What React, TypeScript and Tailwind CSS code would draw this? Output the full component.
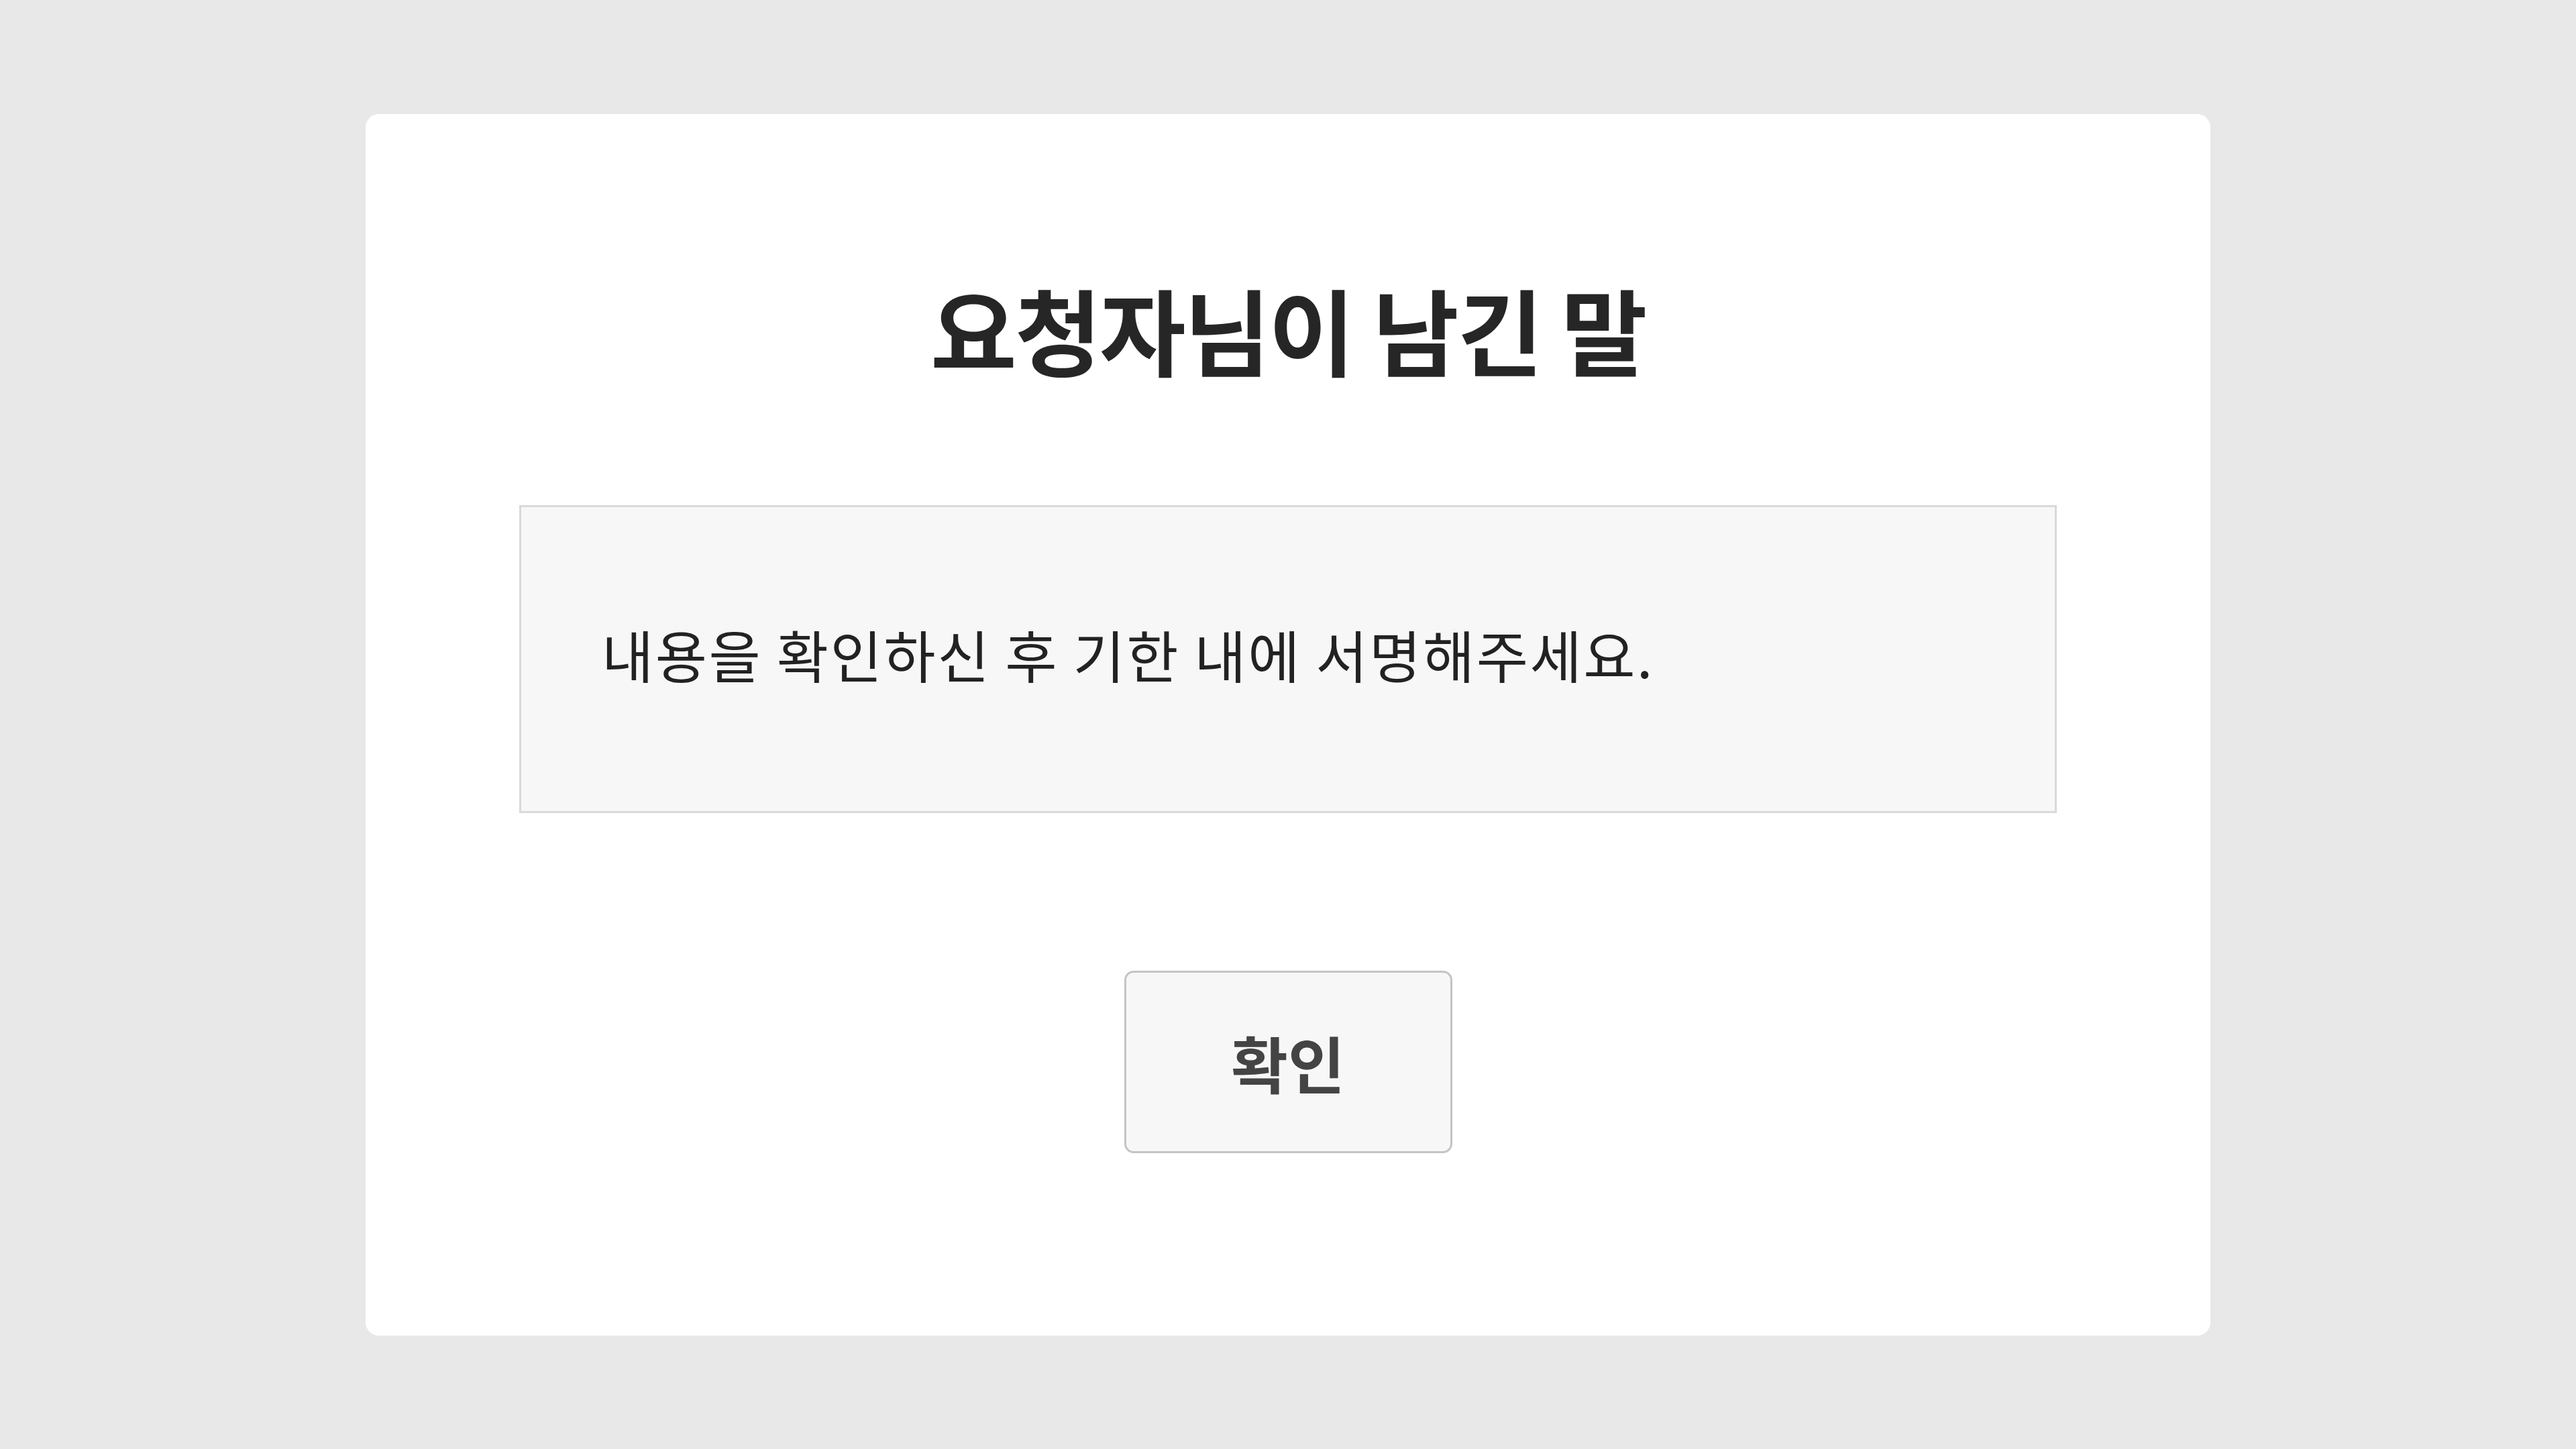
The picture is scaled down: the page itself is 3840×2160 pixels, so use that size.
export default function App() {
  return (
    <div className="min-h-screen w-full bg-[#e8e8e8] flex items-center justify-center font-['Noto_Sans_CJK_KR',sans-serif]">
      <div className="w-[2750px] bg-white rounded-[20px] pt-[249px] pb-[272px] px-[229px] flex flex-col items-center">
        <h1 className="text-[140px] leading-none font-bold tracking-[-0.02em] text-[#262626] text-center">
          요청자님이 남긴 말
        </h1>

        <div className="mt-[194px] w-full h-[459px] border-[3px] border-[#d9d9d9] bg-[#f7f7f7] flex items-center pl-[120px] pb-[14px]">
          <p className="text-[84px] leading-none tracking-[0.03em] text-[#222222]">
            내용을 확인하신 후 기한 내에 서명해주세요.
          </p>
        </div>

        <button
          type="button"
          className="mt-[235px] w-[489px] h-[272px] border-[3px] border-[#c4c4c4] rounded-[14px] bg-[#f7f7f7] flex items-center justify-center"
        >
          <span className="text-[92px] leading-none font-semibold tracking-[0em] text-[#444444]">확인</span>
        </button>
      </div>
    </div>
  );
}
